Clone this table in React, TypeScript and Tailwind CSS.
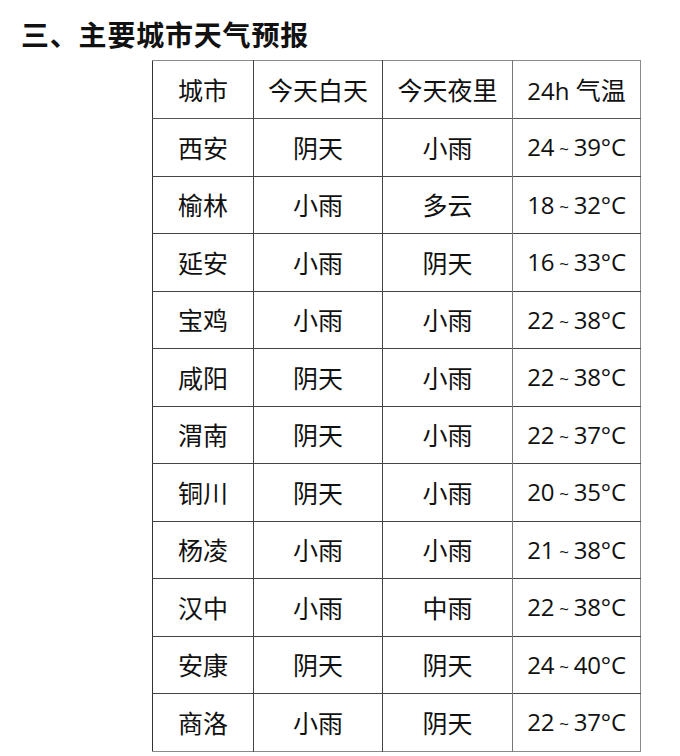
import React from "react";

type Row = {
  city: string;
  day: string;
  night: string;
  temp: string;
};

const rows: Row[] = [
  { city: "西安", day: "阴天", night: "小雨", temp: "24 ~ 39°C" },
  { city: "榆林", day: "小雨", night: "多云", temp: "18 ~ 32°C" },
  { city: "延安", day: "小雨", night: "阴天", temp: "16 ~ 33°C" },
  { city: "宝鸡", day: "小雨", night: "小雨", temp: "22 ~ 38°C" },
  { city: "咸阳", day: "阴天", night: "小雨", temp: "22 ~ 38°C" },
  { city: "渭南", day: "阴天", night: "小雨", temp: "22 ~ 37°C" },
  { city: "铜川", day: "阴天", night: "小雨", temp: "20 ~ 35°C" },
  { city: "杨凌", day: "小雨", night: "小雨", temp: "21 ~ 38°C" },
  { city: "汉中", day: "小雨", night: "中雨", temp: "22 ~ 38°C" },
  { city: "安康", day: "阴天", night: "阴天", temp: "24 ~ 40°C" },
  { city: "商洛", day: "小雨", night: "阴天", temp: "22 ~ 37°C" },
];

const cjk = "font-['Noto_Sans_CJK_SC',sans-serif]";
const num = "font-['Open_Sans','Noto_Sans_CJK_SC',sans-serif]";

function Temp({ value }: { value: string }) {
  const [lo, hi] = value.split(" ~ ");
  return (
    <span className={`${num} tracking-[-0.2px]`}>
      {lo}
      <span className="mx-[5px] align-[1px] text-[17px]">~</span>
      {hi}
    </span>
  );
}

export default function App() {
  return (
    <div className="min-h-screen w-[680px] bg-white text-[#111]">
      {/* 标题 */}
      <h2
        className={`${cjk} pl-[21px] pt-[16px] text-[28px] font-bold leading-[36px] tracking-[0.8px]`}
      >
        三、主要城市天气预报
      </h2>

      {/* 天气表格 */}
      <div className="ml-[152px] mt-[8px] w-[488px]">
        <table className="w-[488px] table-fixed border-collapse border-t border-r border-b border-t-[#8a8a8a] border-r-[#8a8a8a] border-b-[#8a8a8a] border-l border-l-[#333]">
          <colgroup>
            <col className="w-[101px]" />
            <col className="w-[129px]" />
            <col className="w-[130px]" />
            <col className="w-[128px]" />
          </colgroup>
          <thead>
            <tr className="h-[58px] border-b border-[#555]">
              <th className={`${cjk} border-r border-[#444] text-[25px] font-normal`}>城市</th>
              <th className={`${cjk} border-r border-[#444] text-[25px] font-normal`}>今天白天</th>
              <th className={`${cjk} border-r border-[#777] text-[25px] font-normal`}>今天夜里</th>
              <th className={`${num} text-[24px] font-normal`}>
                24h <span className={`${cjk} text-[25px]`}>气温</span>
              </th>
            </tr>
          </thead>
          <tbody>
            {rows.map((row, i) => (
              <tr
                key={row.city}
                className={
                  i < rows.length - 1
                    ? "h-[57.5px] border-b border-[#444]"
                    : "h-[57.5px]"
                }
              >
                <td className={`${cjk} border-r border-[#444] text-center text-[25px]`}>{row.city}</td>
                <td className={`${cjk} border-r border-[#444] text-center text-[25px]`}>{row.day}</td>
                <td className={`${cjk} border-r border-[#777] text-center text-[25px]`}>{row.night}</td>
                <td className="text-center text-[24px]">
                  <Temp value={row.temp} />
                </td>
              </tr>
            ))}
          </tbody>
        </table>
      </div>
    </div>
  );
}
